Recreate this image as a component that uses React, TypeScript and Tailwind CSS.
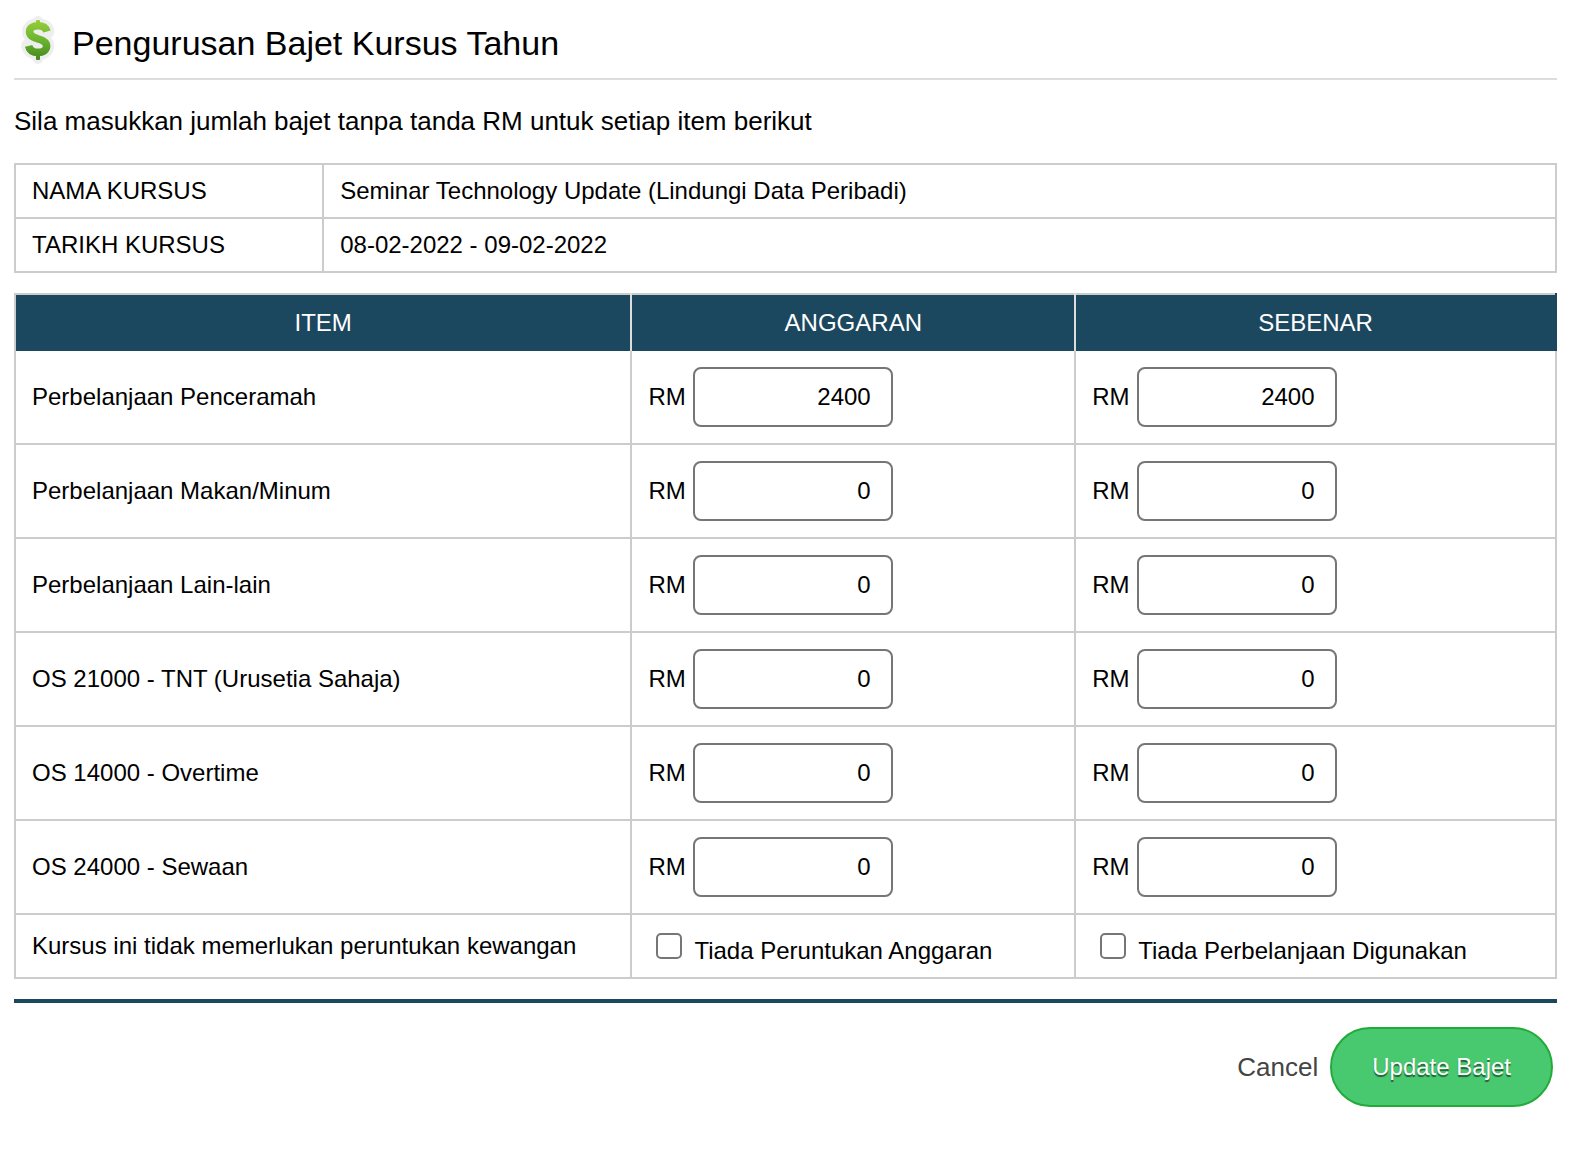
import { useState } from "react";

const items = [
  { id: "penceramah", name: "Perbelanjaan Penceramah", anggaran: "2400", sebenar: "2400" },
  { id: "makan", name: "Perbelanjaan Makan/Minum", anggaran: "0", sebenar: "0" },
  { id: "lain", name: "Perbelanjaan Lain-lain", anggaran: "0", sebenar: "0" },
  { id: "os21000", name: "OS 21000 - TNT (Urusetia Sahaja)", anggaran: "0", sebenar: "0" },
  { id: "os14000", name: "OS 14000 - Overtime", anggaran: "0", sebenar: "0" },
  { id: "os24000", name: "OS 24000 - Sewaan", anggaran: "0", sebenar: "0" },
];

const S_CURVE =
  "M33 15.5C31.8 11.5 28.5 9.8 24 9.8C19 9.8 15.6 12.2 15.6 15.8C15.6 20 19.5 21.4 24 22.8C29 24.2 32.6 25.8 32.6 30C32.6 34.2 29 36.4 24 36.4C18.8 36.4 15.6 34 14.6 29.8";

function DollarIcon() {
  return (
    <svg viewBox="0 0 48 48" className="size-12 shrink-0" fill="none" aria-hidden="true">
      <defs>
        <linearGradient id="green" gradientUnits="userSpaceOnUse" x1="0" y1="4" x2="0" y2="44">
          <stop offset="0" stopColor="#97cf38" />
          <stop offset="0.5" stopColor="#6bb42f" />
          <stop offset="1" stopColor="#44871f" />
        </linearGradient>
      </defs>
      <g stroke="#eeeeee" strokeLinejoin="round" strokeLinecap="round">
        <path d={S_CURVE} strokeWidth="15" />
        <path d="M24 5V43" strokeWidth="10" />
      </g>
      <g fill="url(#green)">
        <rect x="22" y="4" width="4" height="6" rx="1" />
        <rect x="22" y="37" width="4" height="7" rx="1" />
      </g>
      <path d={S_CURVE} stroke="url(#green)" strokeWidth="7.6" />
    </svg>
  );
}

function AmountCell({ id, label, initial }: { id: string; label: string; initial: string }) {
  const [value, setValue] = useState(initial);
  return (
    <td className="border-2 border-[#cccccc] p-4 group-first:border-t-0">
      <div className="flex items-center gap-[7px]">
        <label htmlFor={id}>RM</label>
        <input
          id={id}
          type="text"
          aria-label={label}
          value={value}
          onChange={(e) => setValue(e.target.value)}
          className="h-[60px] w-[200px] rounded-lg border-2 border-[#767676] bg-white px-5 text-right"
        />
      </div>
    </td>
  );
}

function CheckCell({ id, label }: { id: string; label: string }) {
  return (
    <td className="border-2 border-[#cccccc] px-4">
      <div className="flex items-start pt-1.5 pl-2">
        <input
          id={id}
          type="checkbox"
          className="size-[26px] shrink-0 appearance-none rounded-[5px] border-2 border-[#767676] bg-white checked:bg-[#1c485f]"
        />
        <label htmlFor={id} className="pt-1 pl-3">
          {label}
        </label>
      </div>
    </td>
  );
}

export default function App() {
  return (
    <main className="bg-white pt-4 pr-[21px] pb-10 pl-[14px] font-['Liberation_Sans',Arial,sans-serif] text-2xl leading-7 text-black">
      <header className="flex items-start gap-[10px] border-b-2 border-[#dddddd] pb-[14px]">
        <DollarIcon />
        <h1 className="pt-2 text-[34px] leading-[38px]">Pengurusan Bajet Kursus Tahun</h1>
      </header>

      <p className="mt-[26px] mb-[27px] text-[26px] leading-[30px]">
        Sila masukkan jumlah bajet tanpa tanda RM untuk setiap item berikut
      </p>

      <table className="w-full table-fixed border-collapse text-left">
        <tbody>
          <tr>
            <th scope="row" className="w-1/5 border-2 border-[#cccccc] px-4 py-3 font-normal">
              NAMA KURSUS
            </th>
            <td className="border-2 border-[#cccccc] px-4 py-3">
              Seminar Technology Update (Lindungi Data Peribadi)
            </td>
          </tr>
          <tr>
            <th scope="row" className="border-2 border-[#cccccc] px-4 py-3 font-normal">
              TARIKH KURSUS
            </th>
            <td className="border-2 border-[#cccccc] px-4 py-3">08-02-2022 - 09-02-2022</td>
          </tr>
        </tbody>
      </table>

      <form onSubmit={(e) => e.preventDefault()}>
        <table className="mt-5 w-full table-fixed border-collapse text-left">
          <thead>
            <tr className="bg-[#1c485f] text-center text-white">
              <th scope="col" className="w-[40%] border-2 border-b-0 border-[#cccccc] border-r-[#dddddd] py-[14px] font-normal">
                ITEM
              </th>
              <th scope="col" className="w-[28.8%] border-2 border-b-0 border-t-[#cccccc] border-r-[#dddddd] py-[14px] font-normal">
                ANGGARAN
              </th>
              <th scope="col" className="border-2 border-b-0 border-t-[#cccccc] border-r-[#1c485f] py-[14px] font-normal">
                SEBENAR
              </th>
            </tr>
          </thead>
          <tbody>
            {items.map((item) => (
              <tr key={item.id} className="group">
                <th scope="row" className="border-2 border-[#cccccc] px-4 font-normal group-first:border-t-0">
                  {item.name}
                </th>
                <AmountCell id={`${item.id}-anggaran`} label={`RM ${item.name} anggaran`} initial={item.anggaran} />
                <AmountCell id={`${item.id}-sebenar`} label={`RM ${item.name} sebenar`} initial={item.sebenar} />
              </tr>
            ))}
            <tr>
              <th scope="row" className="border-2 border-[#cccccc] px-4 py-[17px] font-normal">
                Kursus ini tidak memerlukan peruntukan kewangan
              </th>
              <CheckCell id="tiada-anggaran" label="Tiada Peruntukan Anggaran" />
              <CheckCell id="tiada-sebenar" label="Tiada Perbelanjaan Digunakan" />
            </tr>
          </tbody>
        </table>

        <footer className="mt-5 flex items-center justify-end gap-3 border-t-4 border-[#1c485f] pt-6 pr-1">
          <a href="#" className="text-[26px] leading-[30px] text-[#444444]">
            Cancel
          </a>
          <button
            type="submit"
            className="h-20 rounded-full border-2 border-[#22aa3a] bg-[#48c970] px-10 text-white [text-shadow:0_2px_1px_rgba(0,0,0,0.55)]"
          >
            Update Bajet
          </button>
        </footer>
      </form>
    </main>
  );
}
